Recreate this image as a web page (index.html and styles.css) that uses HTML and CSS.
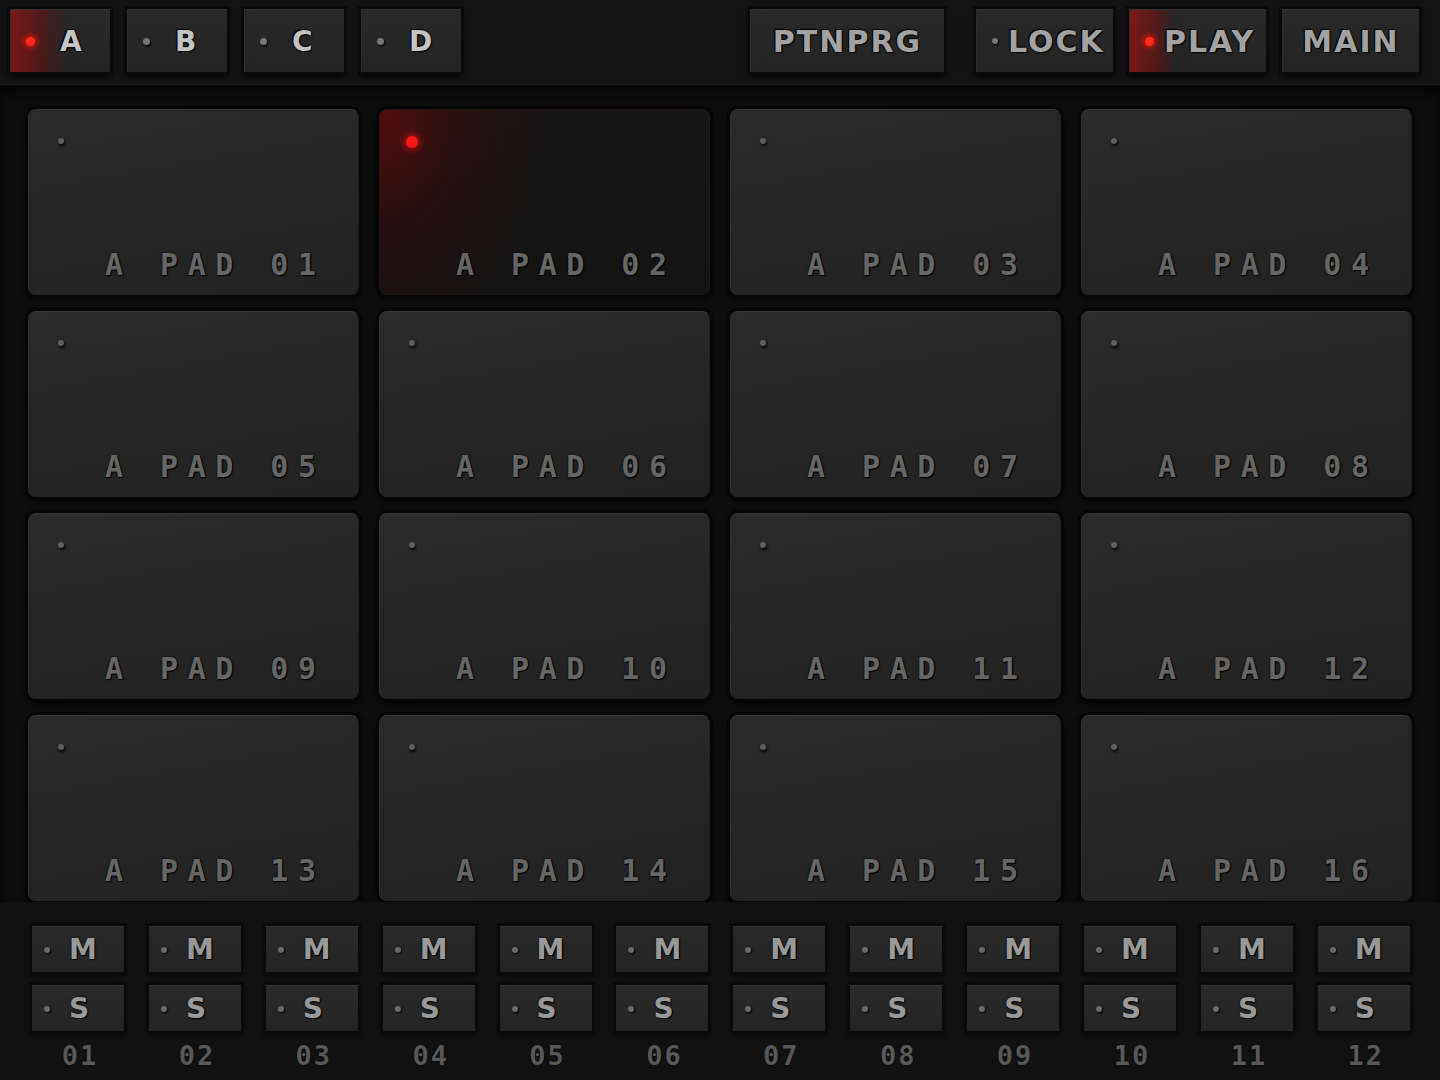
FILE: index.html
```html
<!DOCTYPE html>
<html>
<head>
<meta charset="utf-8">
<link rel="stylesheet" href="styles.css">
</head>
<body>
<div class="app">
  <header class="topbar">
    <div class="banks">
      <div class="btn bank on"><span class="led"></span><span class="blbl">A</span></div>
      <div class="btn bank"><span class="led"></span><span class="blbl">B</span></div>
      <div class="btn bank"><span class="led"></span><span class="blbl">C</span></div>
      <div class="btn bank"><span class="led"></span><span class="blbl">D</span></div>
    </div>
    <div class="modes">
      <div class="btn ptn">PTNPRG</div>
      <div class="btn mode lock"><span class="led"></span><span class="mlbl">LOCK</span></div>
      <div class="btn mode on"><span class="led"></span><span class="mlbl">PLAY</span></div>
      <div class="btn mode main">MAIN</div>
    </div>
  </header>
  <main class="pads">
    <div class="pad"><span class="pled"></span><span class="plbl">A PAD 01</span></div>
    <div class="pad hit"><span class="pled"></span><span class="plbl">A PAD 02</span></div>
    <div class="pad"><span class="pled"></span><span class="plbl">A PAD 03</span></div>
    <div class="pad"><span class="pled"></span><span class="plbl">A PAD 04</span></div>
    <div class="pad"><span class="pled"></span><span class="plbl">A PAD 05</span></div>
    <div class="pad"><span class="pled"></span><span class="plbl">A PAD 06</span></div>
    <div class="pad"><span class="pled"></span><span class="plbl">A PAD 07</span></div>
    <div class="pad"><span class="pled"></span><span class="plbl">A PAD 08</span></div>
    <div class="pad"><span class="pled"></span><span class="plbl">A PAD 09</span></div>
    <div class="pad"><span class="pled"></span><span class="plbl">A PAD 10</span></div>
    <div class="pad"><span class="pled"></span><span class="plbl">A PAD 11</span></div>
    <div class="pad"><span class="pled"></span><span class="plbl">A PAD 12</span></div>
    <div class="pad"><span class="pled"></span><span class="plbl">A PAD 13</span></div>
    <div class="pad"><span class="pled"></span><span class="plbl">A PAD 14</span></div>
    <div class="pad"><span class="pled"></span><span class="plbl">A PAD 15</span></div>
    <div class="pad"><span class="pled"></span><span class="plbl">A PAD 16</span></div>
  </main>
  <section class="mixer">
    <div class="ch"><div class="ms"><span class="led"></span><span class="mslbl">M</span></div><div class="ms"><span class="led"></span><span class="mslbl">S</span></div><div class="num">01</div></div>
    <div class="ch"><div class="ms"><span class="led"></span><span class="mslbl">M</span></div><div class="ms"><span class="led"></span><span class="mslbl">S</span></div><div class="num">02</div></div>
    <div class="ch"><div class="ms"><span class="led"></span><span class="mslbl">M</span></div><div class="ms"><span class="led"></span><span class="mslbl">S</span></div><div class="num">03</div></div>
    <div class="ch"><div class="ms"><span class="led"></span><span class="mslbl">M</span></div><div class="ms"><span class="led"></span><span class="mslbl">S</span></div><div class="num">04</div></div>
    <div class="ch"><div class="ms"><span class="led"></span><span class="mslbl">M</span></div><div class="ms"><span class="led"></span><span class="mslbl">S</span></div><div class="num">05</div></div>
    <div class="ch"><div class="ms"><span class="led"></span><span class="mslbl">M</span></div><div class="ms"><span class="led"></span><span class="mslbl">S</span></div><div class="num">06</div></div>
    <div class="ch"><div class="ms"><span class="led"></span><span class="mslbl">M</span></div><div class="ms"><span class="led"></span><span class="mslbl">S</span></div><div class="num">07</div></div>
    <div class="ch"><div class="ms"><span class="led"></span><span class="mslbl">M</span></div><div class="ms"><span class="led"></span><span class="mslbl">S</span></div><div class="num">08</div></div>
    <div class="ch"><div class="ms"><span class="led"></span><span class="mslbl">M</span></div><div class="ms"><span class="led"></span><span class="mslbl">S</span></div><div class="num">09</div></div>
    <div class="ch"><div class="ms"><span class="led"></span><span class="mslbl">M</span></div><div class="ms"><span class="led"></span><span class="mslbl">S</span></div><div class="num">10</div></div>
    <div class="ch"><div class="ms"><span class="led"></span><span class="mslbl">M</span></div><div class="ms"><span class="led"></span><span class="mslbl">S</span></div><div class="num">11</div></div>
    <div class="ch"><div class="ms"><span class="led"></span><span class="mslbl">M</span></div><div class="ms"><span class="led"></span><span class="mslbl">S</span></div><div class="num">12</div></div>
  </section>
</div>
</body>
</html>
```
FILE: styles.css
```css
* { box-sizing: border-box; }
html, body { margin: 0; padding: 0; }
body {
  background: #121212;
  font-family: "DejaVu Sans", sans-serif;
  width: 1440px;
  height: 1080px;
  overflow: hidden;
}
.app { width: 1440px; height: 1080px; display: flex; flex-direction: column; }

/* ---------- top bar ---------- */
.topbar {
  height: 85px;
  background: #141414;
  border-bottom: 1px solid #1c1c1c;
  display: flex;
  align-items: flex-start;
  padding: 9px 21px 0 10px;
}
.banks { display: flex; gap: 17px; }
.modes { display: flex; gap: 16px; margin-left: auto; }
.btn {
  height: 63px;
  background: linear-gradient(#292929, #232323);
  border-top: 1px solid #333;
  border-left: 1px solid #2d2d2d;
  box-shadow: 0 0 0 3px #0b0b0b, 0 4px 6px #000;
  display: flex;
  align-items: center;
  color: #a2a2a2;
  font-weight: bold;
  font-size: 30px;
  letter-spacing: 2px;
  text-shadow: 0 0 2px #000, 1px 1px 1px #000, -1px -1px 1px #000;
}
.led {
  width: 7px; height: 7px; border-radius: 50%;
  background: #777;
  box-shadow: 1px 1px 2px #000;
  flex: none;
}
.on .led {
  width: 9px; height: 9px;
  background: #ff2a1a;
  box-shadow: 0 0 5px 2px rgba(255, 20, 10, 0.7);
}
.bank { width: 100px; padding-left: 15px; }
.bank .blbl { margin-left: 25px; font-size: 28px; color: #c4c4c4; }
.bank.on {
  background: linear-gradient(90deg, rgba(150, 18, 18, 0.75) 0%, rgba(110, 14, 14, 0.55) 30%, rgba(40, 30, 30, 0.2) 55%, transparent 70%), linear-gradient(#292929, #232323);
}
.ptn { width: 194px; justify-content: center; margin-right: 16px; }
.mode { width: 137px; padding-left: 15px; }
.mode .led { width: 6px; height: 6px; }
.mode.on .led { width: 9px; height: 9px; }
.mode .mlbl { margin-left: 10px; }
.mode.on {
  background: linear-gradient(90deg, rgba(150, 18, 18, 0.75) 0%, rgba(110, 14, 14, 0.5) 22%, rgba(40, 30, 30, 0.2) 32%, transparent 42%), linear-gradient(#292929, #232323);
}
.main { padding-left: 0; justify-content: center; }

/* ---------- pads ---------- */
.pads {
  background: #0f0f0f;
  box-shadow: inset 0 8px 12px #050505;
  padding: 24px 0 0 28px;
  display: grid;
  grid-template-columns: repeat(4, 331px);
  grid-template-rows: repeat(4, 186px);
  column-gap: 20px;
  row-gap: 16px;
  height: 817px;
}
.pad {
  border-radius: 8px;
  background: linear-gradient(170deg, #2b2b2b 0%, #252525 55%, #222 100%);
  border-top: 1px solid #373737;
  border-left: 1px solid #303030;
  border-right: 1px solid #1e1e1e;
  box-shadow: 0 0 0 3px #070707, 0 4px 8px #000;
  display: flex;
  flex-direction: column;
  padding: 0 0 15px 76px;
}
.pled {
  width: 6px; height: 6px; border-radius: 50%;
  background: #5e5e5e;
  box-shadow: 1px 2px 3px #000;
  margin: 28px 0 0 -47px;
}
.plbl {
  margin-top: auto;
  font-family: "DejaVu Sans Mono", monospace;
  font-weight: bold;
  font-size: 30px;
  line-height: 30px;
  letter-spacing: 9.5px;
  color: #666;
  white-space: pre;
  text-shadow: 0 0 2px #000, 1px 1px 1px #000;
}
.pad.hit {
  background: radial-gradient(ellipse 52% 130% at 0% 0%, rgba(95, 12, 12, 0.85) 0%, rgba(60, 10, 10, 0.5) 45%, transparent 100%), linear-gradient(#171717, #141414);
  border-top: 1px solid #241616;
  border-left: 1px solid #2a1515;
}
.pad.hit .pled {
  width: 12px; height: 12px;
  background: #ff1414;
  box-shadow: 0 0 6px 2px rgba(255, 20, 20, 0.55);
  margin: 26px 0 0 -50px;
}

/* ---------- mixer ---------- */
.mixer {
  flex: 1;
  background: #121212;
  padding: 24px 0 0 32px;
  display: grid;
  grid-template-columns: repeat(12, 92px);
  column-gap: 24.9px;
  align-content: start;
}
.ch { display: flex; flex-direction: column; }
.ms {
  height: 46px;
  background: linear-gradient(#292929, #242424);
  border-top: 1px solid #333;
  box-shadow: 0 0 0 3px #0b0b0b, 0 3px 5px #000;
  display: flex;
  align-items: center;
  padding-left: 12px;
  margin-bottom: 13px;
}
.ms .led { width: 6px; height: 6px; background: #6a6a6a; }
.mslbl {
  margin-left: 19px;
  font-weight: bold;
  font-size: 28px;
  color: #999;
  text-shadow: 0 0 2px #000, 1px 1px 1px #000;
}
.num {
  margin-top: -3px;
  text-align: center;
  font-family: "DejaVu Sans Mono", monospace;
  font-weight: bold;
  font-size: 27px;
  line-height: 30px;
  letter-spacing: 2px;
  color: #585858;
  text-shadow: 0 0 2px #000;
  padding-left: 4px;
}
```
